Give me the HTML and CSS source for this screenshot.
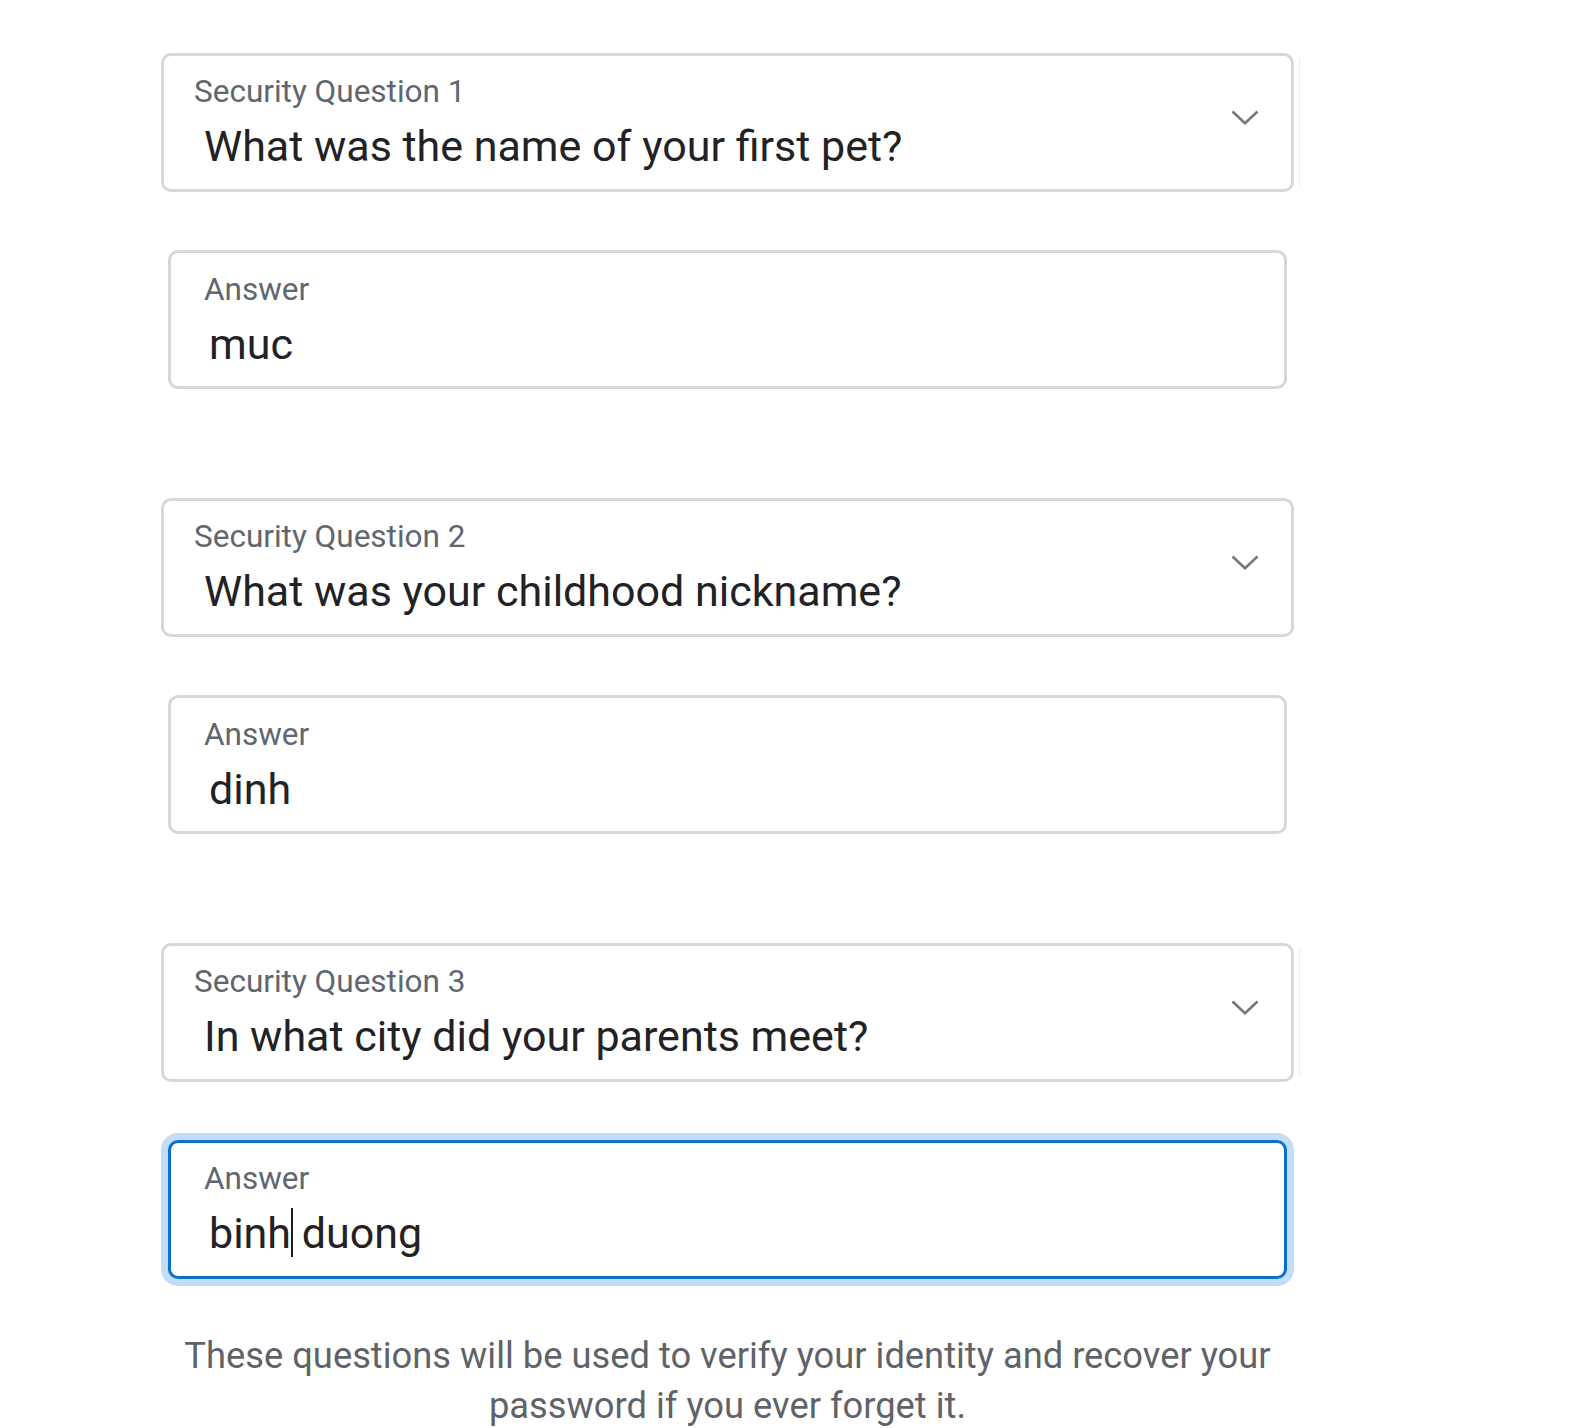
FILE: index.html
```html
<!DOCTYPE html>
<html lang="en">
<head>
<meta charset="utf-8">
<title>Security Questions</title>
<link rel="stylesheet" href="styles.css">
</head>
<body>
<div class="form">
  <div class="field select edge">
    <div class="text">
      <div class="label">Security Question 1</div>
      <div class="value">What was the name of your first pet?</div>
    </div>
    <svg class="chev" width="28" height="15" viewBox="0 0 28 15"><polyline points="1.5,1.5 14,13.2 26.5,1.5" fill="none" stroke="#767676" stroke-width="2.6"/></svg>
  </div>
  <div class="field answer">
    <div class="text">
      <div class="label">Answer</div>
      <div class="value">muc</div>
    </div>
  </div>

  <div class="field select">
    <div class="text">
      <div class="label">Security Question 2</div>
      <div class="value">What was your childhood nickname?</div>
    </div>
    <svg class="chev" width="28" height="15" viewBox="0 0 28 15"><polyline points="1.5,1.5 14,13.2 26.5,1.5" fill="none" stroke="#767676" stroke-width="2.6"/></svg>
  </div>
  <div class="field answer">
    <div class="text">
      <div class="label">Answer</div>
      <div class="value">dinh</div>
    </div>
  </div>

  <div class="field select edge">
    <div class="text">
      <div class="label">Security Question 3</div>
      <div class="value">In what city did your parents meet?</div>
    </div>
    <svg class="chev" width="28" height="15" viewBox="0 0 28 15"><polyline points="1.5,1.5 14,13.2 26.5,1.5" fill="none" stroke="#767676" stroke-width="2.6"/></svg>
  </div>
  <div class="field answer focused">
    <div class="text">
      <div class="label">Answer</div>
      <div class="value">binh<span class="caret"></span> duong</div>
    </div>
  </div>

  <p class="note">These questions will be used to verify your identity and recover your<br>password if you ever forget it.</p>
</div>
</body>
</html>
```

FILE: styles.css
```css
html, body {
  margin: 0;
  padding: 0;
  background: #ffffff;
}

body {
  font-family: Roboto, "Liberation Sans", Arial, sans-serif;
  color: #1d1d1f;
}

.form {
  width: 1133px;
  margin-left: 161px;
  padding-top: 53px;
}

.field {
  position: relative;
  display: flex;
  box-sizing: border-box;
  height: 139px;
  border: 3px solid #d7d7d7;
  border-radius: 10px;
  background: #fff;
  padding: 17px 32px 15px 30px;
}

.select {
  margin-bottom: 58px;
}

.answer {
  margin: 0 7px 109px 7px;
  padding: 18px 32px 14px 33px;
}

.text {
  flex: 1;
  min-width: 0;
}

.label {
  font-size: 31.5px;
  line-height: 38px;
  color: #60666e;
  white-space: nowrap;
}

.value {
  font-size: 43px;
  line-height: 56px;
  margin-top: 7px;
  color: #222225;
  white-space: nowrap;
}

.select .value {
  padding-left: 10px;
}

.answer .value {
  padding-left: 5px;
}

.chev {
  flex: none;
  margin-top: 37px;
  display: block;
}

.edge::after {
  content: "";
  position: absolute;
  left: calc(100% + 8px);
  top: 2px;
  width: 1px;
  height: 128px;
  background: #e4eefa;
}

.answer.focused {
  margin-top: 1px;
  margin-bottom: 0;
  padding-top: 17px;
  padding-bottom: 15px;
  border-color: #0b6fcd;
  box-shadow: 0 0 0 7px #c3ddf8;
}

.caret {
  display: inline-block;
  width: 2px;
  height: 49px;
  background: #1d1d1f;
  vertical-align: -9px;
  margin-right: -2px;
}

.note {
  margin: 52px 0 0 0;
  font-size: 36.3px;
  line-height: 50px;
  text-align: center;
  color: #5f6368;
}
```
